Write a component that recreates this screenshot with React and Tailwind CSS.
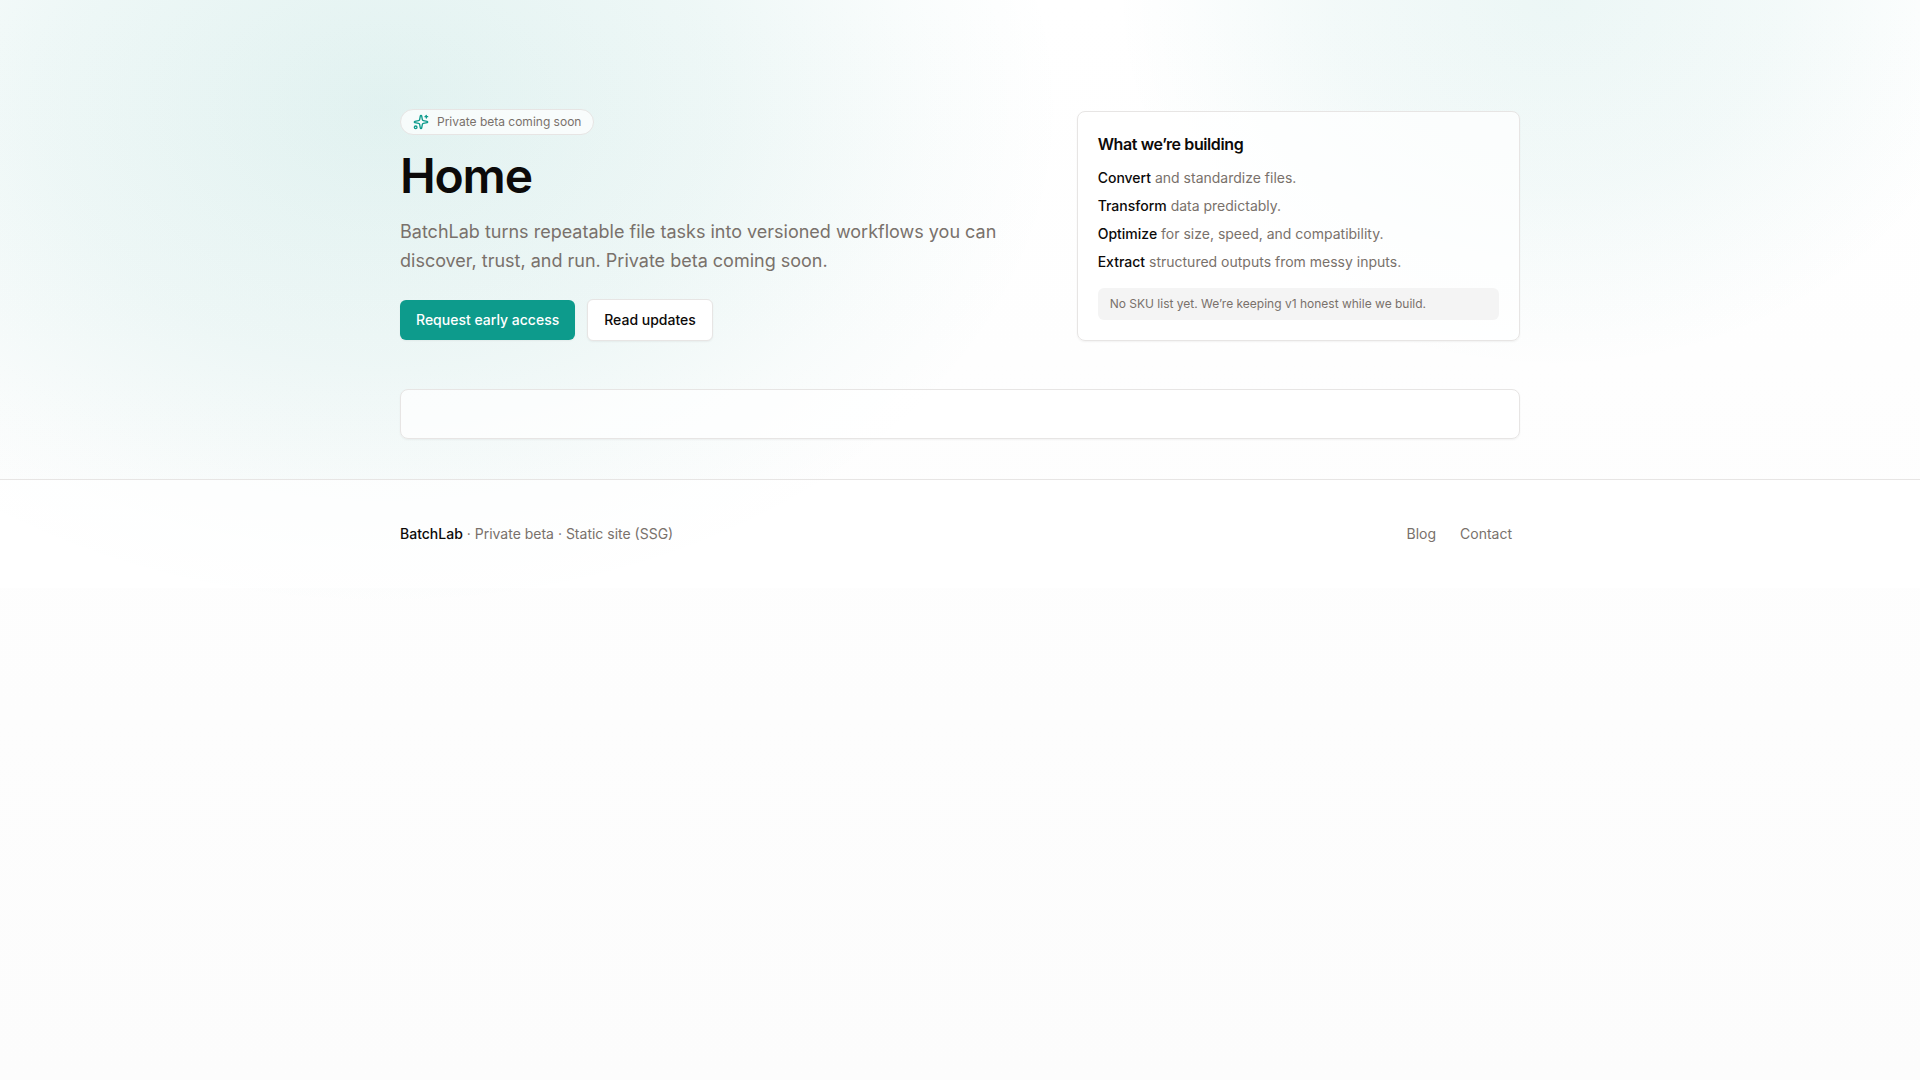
import React from 'react';

const capabilities = [
  { verb: 'Convert', rest: 'and standardize files.' },
  { verb: 'Transform', rest: 'data predictably.' },
  { verb: 'Optimize', rest: 'for size, speed, and compatibility.' },
  { verb: 'Extract', rest: 'structured outputs from messy inputs.' },
];

const footerLinks = [
  { label: 'Blog', href: '#blog' },
  { label: 'Contact', href: '#contact' },
];

const SparklesIcon = ({ className }) => (
  <svg
    className={className}
    viewBox="0 0 24 24"
    fill="none"
    stroke="currentColor"
    strokeWidth="2"
    strokeLinecap="round"
    strokeLinejoin="round"
    aria-hidden="true"
  >
    <path d="M11.017 2.814a1 1 0 0 1 1.966 0l1.051 5.558a2 2 0 0 0 1.594 1.594l5.558 1.051a1 1 0 0 1 0 1.966l-5.558 1.051a2 2 0 0 0-1.594 1.594l-1.051 5.558a1 1 0 0 1-1.966 0l-1.051-5.558a2 2 0 0 0-1.594-1.594l-5.558-1.051a1 1 0 0 1 0-1.966l5.558-1.051a2 2 0 0 0 1.594-1.594z" />
    <path d="M20 2v4" />
    <path d="M22 4h-4" />
    <circle cx="4" cy="20" r="2" />
  </svg>
);

const Hero = () => (
  <section className="grid items-end gap-10 lg:grid-cols-12">
    <div className="lg:col-span-7">
      <div className="flex w-fit items-center gap-2 rounded-full border border-stone-200 bg-white/70 px-3 py-1 text-xs text-stone-500">
        <SparklesIcon className="size-4 text-[#0d9b8c]" />
        Private beta coming soon
      </div>
      <h1 className="mt-4 text-5xl leading-[50px] font-semibold tracking-tight">Home</h1>
      <p className="mt-4 max-w-2xl text-lg leading-[29px] text-stone-500">
        BatchLab turns repeatable file tasks into versioned workflows you can discover, trust, and run. Private beta
        coming soon.
      </p>
      <div className="mt-6 flex flex-wrap items-center gap-3">
        <a
          href="#access"
          className="rounded-md bg-[#0d9b8c] px-4 py-2.5 text-sm font-medium text-white shadow-xs"
        >
          Request early access
        </a>
        <a
          href="#updates"
          className="rounded-md border border-stone-200 bg-white px-4 py-2.5 text-sm font-medium shadow-xs"
        >
          Read updates
        </a>
      </div>
    </div>

    <aside className="rounded-lg border border-stone-200 bg-white/70 p-5 shadow-xs lg:col-span-5">
      <h2 className="text-base font-semibold tracking-tight">What we’re building</h2>
      <ul className="mt-3 space-y-2 text-sm text-stone-500">
        {capabilities.map((item) => (
          <li key={item.verb}>
            <span className="font-medium text-stone-950">{item.verb}</span> {item.rest}
          </li>
        ))}
      </ul>
      <p className="mt-4 rounded-md bg-[#f4f4f4] px-3 py-2 text-xs text-stone-500">
        No SKU list yet. We’re keeping v1 honest while we build.
      </p>
    </aside>
  </section>
);

const Footer = () => (
  <footer className="border-t border-stone-200 bg-white/70">
    <div className="mx-auto flex max-w-6xl items-center justify-between px-4 py-10 text-sm text-stone-500">
      <p>
        <span className="font-medium text-stone-950">BatchLab</span> · Private beta · Static site (SSG)
      </p>
      <nav className="flex gap-2">
        {footerLinks.map((link) => (
          <a key={link.label} href={link.href} className="rounded-md px-2 py-1">
            {link.label}
          </a>
        ))}
      </nav>
    </div>
  </footer>
);

const App = () => (
  <div className="min-h-screen bg-[radial-gradient(680px_500px_at_20%_10%,rgba(13,148,136,0.12),rgba(13,148,136,0.07)_50%,rgba(13,148,136,0.025)_80%,transparent),radial-gradient(440px_370px_at_81%_0%,rgba(13,148,136,0.08),rgba(13,148,136,0.05)_50%,rgba(13,148,136,0.02)_80%,transparent),linear-gradient(to_bottom,#ffffff,#fcfcfc)] font-['Inter',sans-serif] text-stone-950 antialiased">
    <main className="mx-auto max-w-6xl px-4 pt-[109px] pb-10">
      <Hero />
      <section className="mt-12 rounded-lg border border-stone-200 bg-white/70 p-6 shadow-xs" />
    </main>
    <Footer />
  </div>
);

export default App;
